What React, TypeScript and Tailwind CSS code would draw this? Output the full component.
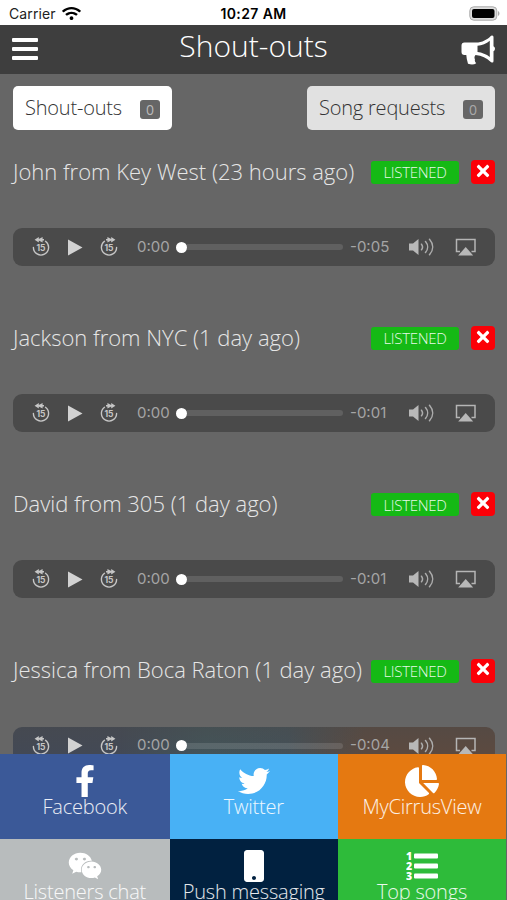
import {
  FaChartPie,
  FaFacebookF,
  FaMobile,
  FaTimes,
  FaTwitter,
  FaWeixin,
  FaWifi,
} from "react-icons/fa";

const shouts = [
  { title: "John from Key West (23 hours ago)", left: "-0:05" },
  { title: "Jackson from NYC (1 day ago)", left: "-0:01" },
  { title: "David from 305 (1 day ago)", left: "-0:01" },
  { title: "Jessica from Boca Raton (1 day ago)", left: "-0:04" },
];

const tiles = [
  { label: "Facebook", icon: FaFacebookF, color: "bg-[#3b5998]", size: "size-8" },
  { label: "Twitter", icon: FaTwitter, color: "bg-[#48b1f5]", size: "size-8" },
  { label: "MyCirrusView", icon: FaChartPie, color: "bg-[#e57911]", size: "size-8.5" },
  { label: "Listeners chat", icon: FaWeixin, color: "bg-[#b8bcbd]", size: "size-8.5" },
  { label: "Push messaging", icon: FaMobile, color: "bg-[#012140]", size: "size-8" },
  { label: "Top songs", icon: NumberedList, color: "bg-[#2ebb3a]", size: "size-8" },
];

function NumberedList({ className }: { className?: string }) {
  return (
    <svg className={className} viewBox="0 0 32 32" fill="currentColor">
      {["1", "2", "3"].map((digit, i) => (
        <g key={digit} transform={`translate(0 ${i * 10})`}>
          <text
            x="3.2"
            y="9.5"
            textAnchor="middle"
            className="font-['Open_Sans',sans-serif] text-[10.5px] font-extrabold"
          >
            {digit}
          </text>
          <rect x="8" y="3.5" width="24" height="5" rx="1" />
        </g>
      ))}
    </svg>
  );
}

function Megaphone() {
  return (
    <svg className="h-[30px] w-[34px]" viewBox="0 0 34 30" fill="#fff">
      <path
        fillRule="evenodd"
        d="M3.5 7.500H15C21 7.500 26.500 4.500 30 .7Q32.500 -.3 32.500 2V11.300Q34 12 34 13.700T32.500 16.200V26Q32.500 28.500 29.800 27C25.500 23 21 20.600 14.500 20Q12.700 22 14 24.300Q13.200 26 15.200 28.300Q12 30.500 7 28.800Q5.500 24 5.300 20H3.500Q.5 20 .5 17V10.500Q.5 7.500 3.500 7.500ZM16.500 10.800V16.900C21 17.400 25.300 19.100 28.800 21.900V5.700C25.300 8.700 21 10.400 16.500 10.800Z"
      />
    </svg>
  );
}

function StatusBar() {
  return (
    <div className="relative flex h-[25px] shrink-0 items-center justify-between bg-white pl-[9px] pr-[7px] pt-[3px] font-['Inter','Liberation_Sans',sans-serif] font-normal text-[#222]">
      <div className="flex items-center gap-[6px]">
        <span className="text-[14px] leading-none tracking-[0.1px]">Carrier</span>
        <FaWifi className="mb-0.5 h-[15px] w-[19px] text-black" />
      </div>
      <span className="absolute inset-x-0 text-center text-[14px] font-semibold leading-none tracking-[0.4px] text-black">
        10:27 AM
      </span>
      <svg className="mb-[2px]" width="31" height="15" viewBox="0 0 31 15">
        <rect x="0.8" y="0.8" width="27" height="13.4" rx="4" fill="#ddd" stroke="#aaa" />
        <rect x="3" y="3" width="22.5" height="9" rx="2" fill="#000" />
        <path d="M29 5v5c2-1 2-4 0-5z" fill="#aaa" />
      </svg>
    </div>
  );
}

function Skip({ forward = false }: { forward?: boolean }) {
  return (
    <svg className="size-[20px]" viewBox="0 0 20 20" fill="none">
      <g transform={forward ? "translate(20 0) scale(-1 1)" : undefined}>
        <path
          d="M2.400 10.500A7.600 7.600 0 1 0 14.500 4.300"
          stroke="#c6c6c6"
          strokeWidth="1.4"
          strokeLinecap="round"
        />
        <path d="M3.600 2.800 7.800 0v2L11.600 0v2H13v1.600H11.600v2L7.800 3.600v2z" fill="#c6c6c6" />
      </g>
      <text
        x="10"
        y="13.6"
        textAnchor="middle"
        fill="#c6c6c6"
        className="font-['Inter',sans-serif] text-[8.5px] font-bold"
      >
        15
      </text>
    </svg>
  );
}

function Player({ left, tinted }: { left: string; tinted: boolean }) {
  return (
    <div
      className={`flex h-[38px] items-center rounded-[9px] pl-[18px] pr-[18px] font-['Inter','Liberation_Sans',sans-serif] text-[15px] font-normal text-[#a5a5a5] ${
        tinted
          ? "bg-[linear-gradient(to_top,transparent_30%,#4a4a4a60_100%),linear-gradient(to_right,#434955_0%,#434955_22%,#435459_40%,#455158_57%,#5c4a40_73%,#5c4a40_100%)]"
          : "bg-[#4a4a4a]"
      }`}
    >
      <Skip />
      <svg className="ml-[17px] h-[17px] w-[15px]" viewBox="0 0 15 17" fill="#d2d2d2">
        <path d="M0 .5 14.5 8.5 0 16.5z" />
      </svg>
      <span className="ml-[16px] flex">
        <Skip forward />
      </span>
      <span className="ml-[18px] w-[33px] whitespace-nowrap">0:00</span>
      <div className="ml-[6px] flex w-[167px] items-center">
        <div className="size-[11px] shrink-0 rounded-full bg-white" />
        <div className="h-[6px] flex-1 rounded-r-full bg-white/12" />
      </div>
      <span className="ml-[7px] w-[40px] whitespace-nowrap">{left}</span>
      <svg className="ml-[18px] h-[18px] w-[27px]" viewBox="0 0 27 18" fill="none" stroke="#adadad">
        <path d="M1 5.500h4l5.500-4.500v16L5 12.500H1z" fill="#b8b8b8" stroke="none" />
        <path
          d="M13.500 6.200c1.200 1.600 1.200 4 0 5.600M17.500 3.500c2.800 3.300 2.800 7.700 0 11M21.500 1.200c4.200 4.800 4.200 10.800 0 15.600"
          strokeWidth="1.5"
          strokeLinecap="round"
        />
      </svg>
      <svg className="ml-auto h-[18px] w-[22px]" viewBox="0 0 22 18" fill="none" stroke="#b5b5b5">
        <path d="M5 13.500H1.500v-12h18.500v12h-3.500" strokeWidth="1.5" />
        <path d="m10.700 9 7.500 8.500h-15z" fill="#b8b8b8" stroke="none" />
      </svg>
    </div>
  );
}

export default function App() {
  return (
    <div className="flex h-[900px] w-[507px] flex-col overflow-hidden bg-[#666] font-['Open_Sans',sans-serif] font-light">
      <StatusBar />
      {/* Header */}
      <header className="flex h-[49px] shrink-0 items-center justify-between bg-[#3e3e3e] pl-[12px] pr-[12px] text-white">
        <div className="mb-[2px] flex w-[34px] flex-col gap-[5px]">
          <span className="h-[4px] w-[26px] rounded-[1px] bg-white" />
          <span className="h-[4px] w-[26px] rounded-[1px] bg-white" />
          <span className="h-[4px] w-[26px] rounded-[1px] bg-white" />
        </div>
        <h1 className="mb-[7px] whitespace-nowrap text-[30px] leading-[40px]">Shout-outs</h1>
        <Megaphone />
      </header>

      {/* Tabs */}
      <div className="mx-[13px] mr-[12px] mt-[12px] flex h-[44px] shrink-0 justify-between text-[20px] tracking-[-0.2px] text-[#333]">
        <button className="flex w-[159px] items-center justify-between rounded-[5px] bg-white pl-[12px] pr-[12px]">
          <span className="whitespace-nowrap">Shout-outs</span>
          <span className="mt-[3px] flex h-[19px] w-[20px] items-center justify-center rounded-[3px] bg-[#666] text-[14px] font-normal text-[#bbb]">
            0
          </span>
        </button>
        <button className="flex w-[188px] items-center justify-between rounded-[5px] bg-[#e1e1e1] pl-[12px] pr-[12px]">
          <span className="whitespace-nowrap">Song requests</span>
          <span className="mt-[3px] flex h-[19px] w-[20px] items-center justify-center rounded-[3px] bg-[#666] text-[14px] font-normal text-[#aaa]">
            0
          </span>
        </button>
      </div>

      {/* Shout-out list */}
      <main className="h-[623.5px] shrink-0 overflow-hidden pl-[13px] pr-[12px] pt-[30px]">
        {shouts.map((shout, i) => (
          <div key={shout.title} className="h-[166.2px]">
            <div className="flex h-6 items-center">
              <h2 className="mb-[2px] w-0 flex-1 whitespace-nowrap text-[22px] text-[#e6e6e6]">
                {shout.title}
              </h2>
              <span className="mr-[12px] mt-px flex h-[23px] w-[88px] items-center justify-center rounded-[3px] bg-[#15b915] text-[15px] tracking-[-0.3px] text-[#e8f8e8]">
                LISTENED
              </span>
              <button className="flex size-6 items-center justify-center rounded-[4px] bg-[#fb0007] text-white">
                <FaTimes className="mb-[3px] size-[18px]" />
              </button>
            </div>
            <div className="pt-[44px]">
              <Player left={shout.left} tinted={i === shouts.length - 1} />
            </div>
          </div>
        ))}
      </main>

      {/* Bottom tiles */}
      <nav className="grid shrink-0 auto-rows-[85.5px] grid-cols-[169.5px_168.5px_168px]">
        {tiles.map(({ label, icon: Icon, color, size }) => (
          <div key={label} className={`flex flex-col items-center pt-[10px] text-white ${color}`}>
            <div className="flex h-[34px] items-center">
              <Icon className={size} />
            </div>
            <span className="-mt-[5px] whitespace-nowrap text-[20px] leading-[28px] tracking-[-0.2px] text-white/90">
              {label}
            </span>
          </div>
        ))}
      </nav>
    </div>
  );
}
